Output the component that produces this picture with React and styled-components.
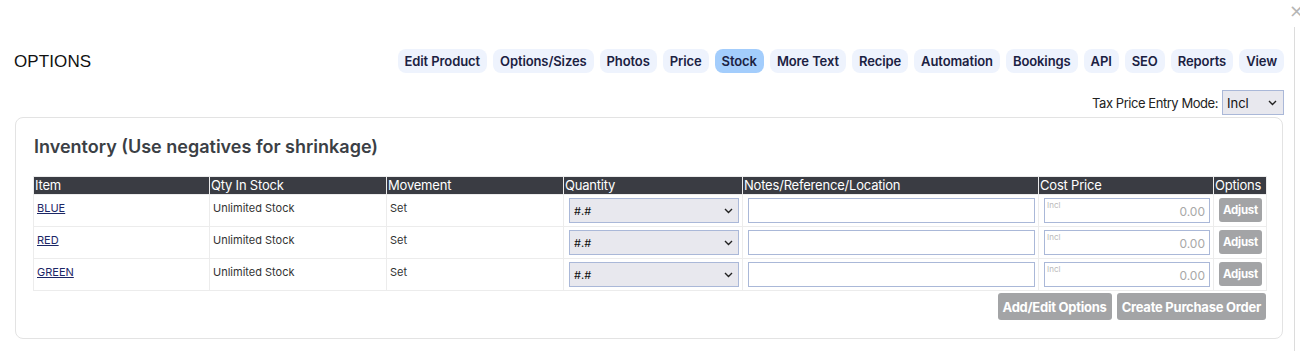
import React from "react";
import styled, { createGlobalStyle } from "styled-components";

const Global = createGlobalStyle`
  html, body { margin: 0; padding: 0; background: #fff; }
  body { font-family: Inter, "Noto Sans", sans-serif; color: #222; }
  * { box-sizing: border-box; }
`;

const Page = styled.div`
  display: flex;
  width: 1300px;
  height: 351px;
  position: relative;
  overflow: hidden;
`;

const Main = styled.div`
  flex: 1;
  padding: 49px 10px 0 14px;
  display: flex;
  flex-direction: column;
`;

const Gutter = styled.div`
  width: 6px;
  margin-top: 27px;
  border-left: 1px solid #dcdcdc;
`;

const Close = styled.div`
  position: absolute;
  right: -4px;
  top: 2px;
  font-size: 18px;
  color: #b5b5b5;
  font-family: "DejaVu Sans", sans-serif;
  line-height: 1;
`;

const Header = styled.div`
  display: flex;
  align-items: center;
  justify-content: space-between;
  height: 24px;
`;

const Title = styled.div`
  font-family: "Liberation Sans", Arial, sans-serif;
  font-size: 17px;
  color: #111;
  letter-spacing: 0.1px;
  padding-top: 2px;
`;

const Tabs = styled.div`
  display: flex;
  gap: 6px;
`;

const Tab = styled.div`
  height: 24px;
  padding: 0 7px;
  display: flex;
  align-items: center;
  border-radius: 8px;
  font-size: 13px;
  font-weight: 600;
  letter-spacing: -0.1px;
  color: #1b2142;
  background: ${(p) => (p.$active ? "#a3cdfc" : "#eef3fd")};
`;

const TaxRow = styled.div`
  display: flex;
  justify-content: flex-end;
  align-items: center;
  gap: 4px;
  margin-top: 17px;
  height: 25px;
`;

const TaxLabel = styled.span`
  font-size: 13px;
  color: #222;
  letter-spacing: -0.45px;
`;

const SelectWrap = styled.div`
  position: relative;
  width: ${(p) => p.$w || "100%"};
  height: 25px;
`;

const Select = styled.select`
  appearance: none;
  width: 100%;
  height: 100%;
  background: #e8e8ee;
  border: 1px solid #aab8d8;
  border-radius: 0;
  font-family: Inter, sans-serif;
  font-size: ${(p) => p.$fs || "13px"};
  color: #111;
  padding: 0 0 0 4px;
  outline: none;
`;

const Chevron = styled.svg`
  position: absolute;
  right: ${(p) => p.$r || "8px"};
  top: 50%;
  margin-top: -3px;
  pointer-events: none;
`;

const Card = styled.div`
  margin: 2px 1px 0 1px;
  border: 1px solid #e3e3e3;
  border-radius: 8px;
  padding: 17px 15px 18px 17px;
  display: flex;
  flex-direction: column;
`;

const Heading = styled.h2`
  margin: 0 0 17px 1px;
  font-size: 18px;
  font-weight: 600;
  color: #3b4045;
  line-height: 24px;
`;

const Table = styled.table`
  width: 100%;
  border-collapse: collapse;
  border: 1px solid #ececec;
`;

const Th = styled.th`
  background: #3a3c43;
  color: #fff;
  font-size: 13px;
  font-weight: 400;
  text-align: left;
  padding: 0 1px;
  height: 18px;
  line-height: 17px;
  border-left: 1px solid #ececec;
  width: ${(p) => p.$w};
  letter-spacing: -0.2px;
  &:first-child { border-left: none; }
`;

const Td = styled.td`
  vertical-align: top;
  border: 1px solid #ececec;
  padding: ${(p) => (p.$field ? "3px 3px 2px 5px" : "6px 4px 0 3px")};
  font-size: 11px;
  color: #333;
  height: 32px;
`;

const ItemLink = styled.a`
  color: #1c2766;
  text-decoration: underline;
  font-size: 11px;
`;

const TextInput = styled.input`
  display: block;
  width: 100%;
  height: 25px;
  border: 1px solid #aab8d8;
  background: #fff;
  outline: none;
`;

const CostWrap = styled.div`
  position: relative;
  height: 25px;
  border: 1px solid #aab8d8;
  background: #fff;
`;

const CostTag = styled.span`
  position: absolute;
  left: 2px;
  top: 1px;
  font-size: 8px;
  color: #b9b9b9;
`;

const CostValue = styled.span`
  position: absolute;
  right: 4px;
  bottom: 3px;
  font-size: 12px;
  color: #a8a8a8;
`;

const Btn = styled.button`
  border: none;
  background: #a3a4a6;
  color: #fff;
  font-family: Inter, sans-serif;
  font-weight: 700;
  border-radius: 3px;
  cursor: pointer;
  font-size: ${(p) => (p.$small ? "11.5px" : "13px")};
  height: ${(p) => (p.$small ? "24px" : "27px")};
  padding: ${(p) => (p.$small ? "0 4px" : "0 5px")};
  letter-spacing: -0.25px;
`;

const Footer = styled.div`
  display: flex;
  justify-content: flex-end;
  gap: 5px;
  margin-top: 2px;
  padding-right: 1px;
`;

const Chev = ({ r }) => (
  <Chevron $r={r} width="9" height="6" viewBox="0 0 9 6">
    <path d="M1 1l3.5 3.5L8 1" fill="none" stroke="#222" strokeWidth="1.4" />
  </Chevron>
);

const tabs = ["Edit Product", "Options/Sizes", "Photos", "Price", "Stock", "More Text", "Recipe", "Automation", "Bookings", "API", "SEO", "Reports", "View"];
const rows = ["BLUE", "RED", "GREEN"];

export default function App() {
  return (
    <>
      <Global />
      <Page>
        <Main>
          <Header>
            <Title>OPTIONS</Title>
            <Tabs>
              {tabs.map((t) => (
                <Tab key={t} $active={t === "Stock"}>{t}</Tab>
              ))}
            </Tabs>
          </Header>
          <TaxRow>
            <TaxLabel>Tax Price Entry Mode:</TaxLabel>
            <SelectWrap $w="62px">
              <Select defaultValue="Incl"><option>Incl</option><option>Excl</option></Select>
              <Chev r="7px" />
            </SelectWrap>
          </TaxRow>
          <Card>
            <Heading>Inventory (Use negatives for shrinkage)</Heading>
            <Table>
              <thead>
                <tr>
                  <Th $w="176px">Item</Th>
                  <Th $w="177px">Qty In Stock</Th>
                  <Th $w="177px">Movement</Th>
                  <Th $w="179px">Quantity</Th>
                  <Th $w="296px">Notes/Reference/Location</Th>
                  <Th $w="175px">Cost Price</Th>
                  <Th>Options</Th>
                </tr>
              </thead>
              <tbody>
                {rows.map((r) => (
                  <tr key={r}>
                    <Td><ItemLink href="#">{r}</ItemLink></Td>
                    <Td>Unlimited Stock</Td>
                    <Td>Set</Td>
                    <Td $field>
                      <SelectWrap>
                        <Select $fs="11px" defaultValue="#.#"><option>#.#</option></Select>
                        <Chev r="6px" />
                      </SelectWrap>
                    </Td>
                    <Td $field><TextInput /></Td>
                    <Td $field>
                      <CostWrap>
                        <CostTag>Incl</CostTag>
                        <CostValue>0.00</CostValue>
                      </CostWrap>
                    </Td>
                    <Td $field><Btn $small>Adjust</Btn></Td>
                  </tr>
                ))}
              </tbody>
            </Table>
            <Footer>
              <Btn>Add/Edit Options</Btn>
              <Btn>Create Purchase Order</Btn>
            </Footer>
          </Card>
        </Main>
        <Gutter />
        <Close>×</Close>
      </Page>
    </>
  );
}
